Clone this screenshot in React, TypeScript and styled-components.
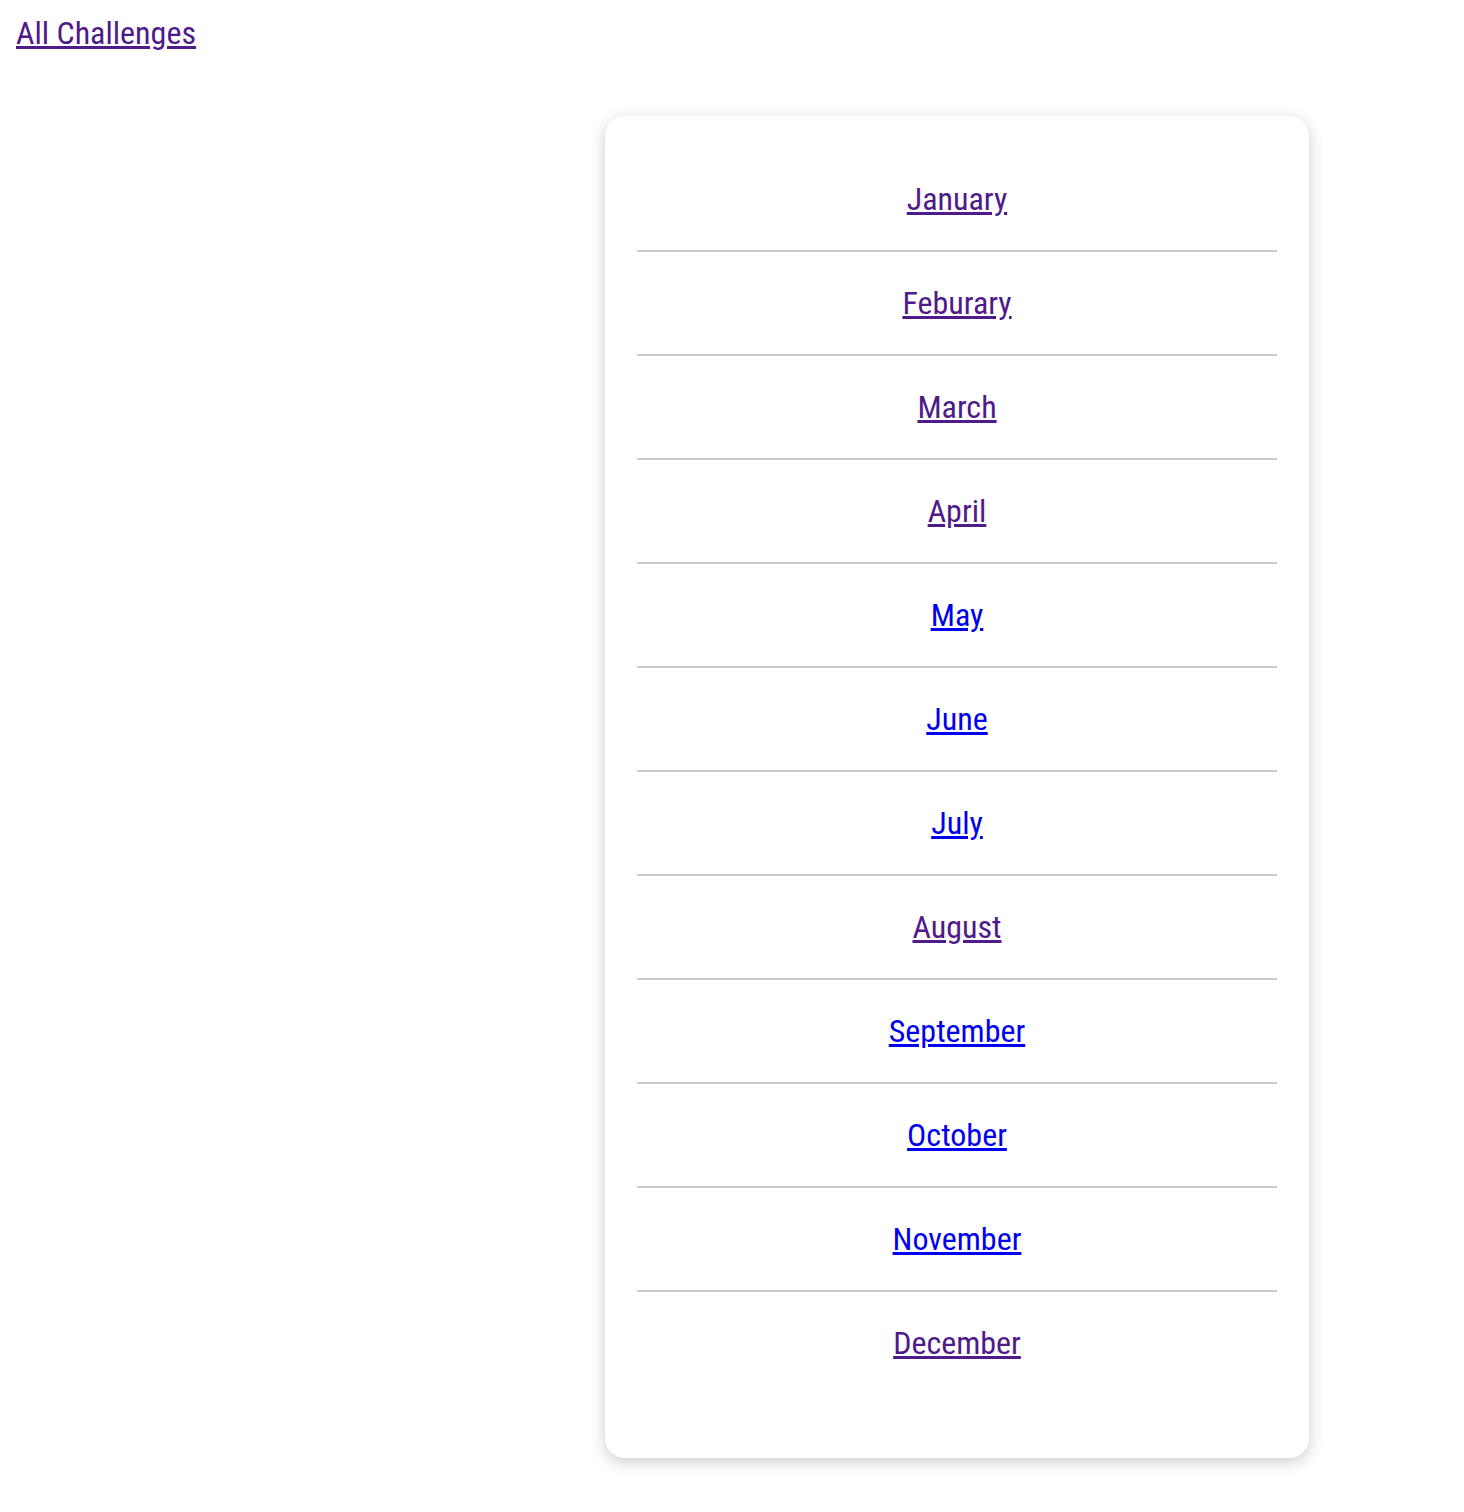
import React, { FC } from 'react';
import styled, { createGlobalStyle } from 'styled-components';

const GlobalStyle = createGlobalStyle`
  html, body {
    margin: 0;
    padding: 0;
    background: #ffffff;
    font-family: 'Roboto Condensed', Roboto, 'Liberation Sans', sans-serif;
  }
`;

const Page = styled.div`
  padding: 14px 16px 40px;
`;

const BackLink = styled.a<{ $visited?: boolean }>`
  display: inline-block;
  font-size: 32px;
  font-stretch: condensed;
  color: ${(p) => (p.$visited ? '#4f1a8a' : '#0000ee')};
  text-decoration: underline;
`;

const Center = styled.div`
  display: flex;
  justify-content: center;
  margin-top: 64px;
  padding-left: 450px;
`;

const Card = styled.ul`
  width: 640px;
  margin: 0;
  padding: 32px 32px 64px;
  list-style: none;
  background: #ffffff;
  border-radius: 20px;
  box-shadow: 0 4px 16px rgba(0, 0, 0, 0.2);
`;

const Row = styled.li`
  height: 102px;
  display: flex;
  align-items: center;
  justify-content: center;
  border-bottom: 2px solid #cccccc;

  &:last-child {
    border-bottom: none;
  }
`;

const MonthLink = styled.a<{ $visited?: boolean }>`
  font-size: 32px;
  font-stretch: condensed;
  color: ${(p) => (p.$visited ? '#4f1a8a' : '#0000ee')};
  text-decoration: underline;
`;

const months: { name: string; visited: boolean }[] = [
  { name: 'January', visited: true },
  { name: 'Feburary', visited: true },
  { name: 'March', visited: true },
  { name: 'April', visited: true },
  { name: 'May', visited: false },
  { name: 'June', visited: false },
  { name: 'July', visited: false },
  { name: 'August', visited: true },
  { name: 'September', visited: false },
  { name: 'October', visited: false },
  { name: 'November', visited: false },
  { name: 'December', visited: true },
];

const App: FC = () => {
  return (
    <Page>
      <GlobalStyle />
      <BackLink href='#' $visited>
        All Challenges
      </BackLink>
      <Center>
        <Card>
          {months.map((m) => (
            <Row key={m.name}>
              <MonthLink href='#' $visited={m.visited}>
                {m.name}
              </MonthLink>
            </Row>
          ))}
        </Card>
      </Center>
    </Page>
  );
};

export default App;
